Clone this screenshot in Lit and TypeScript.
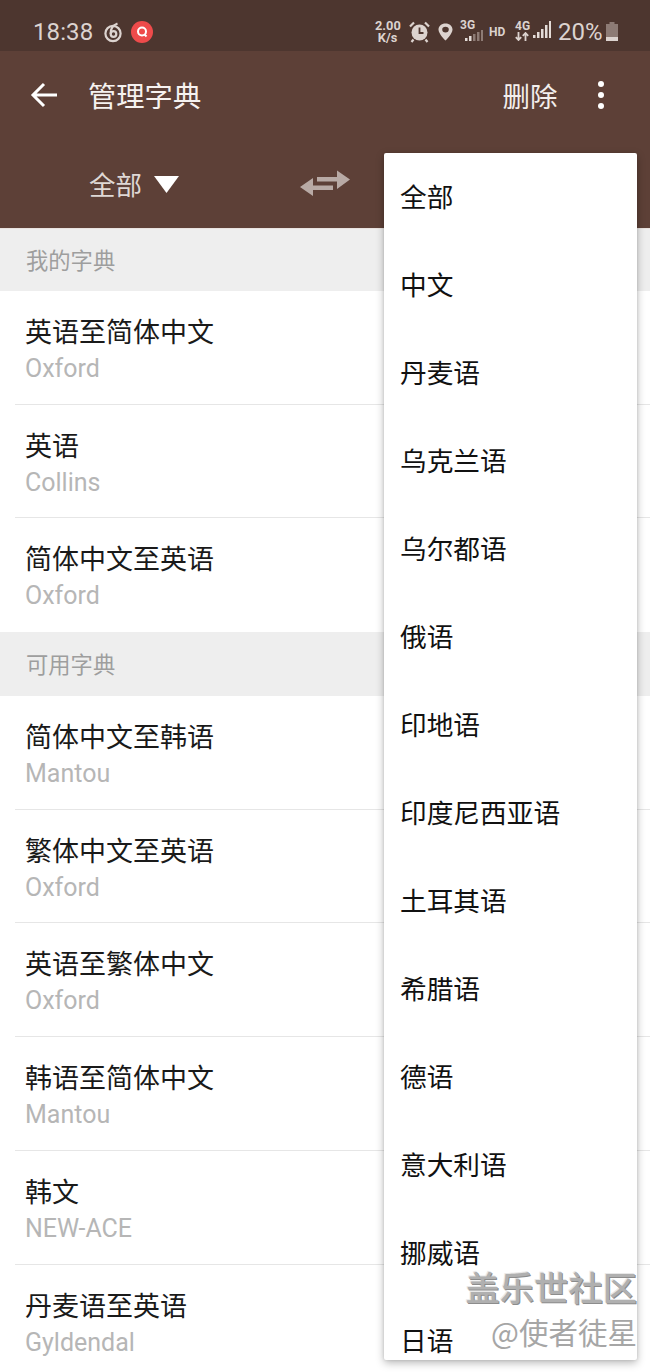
import { LitElement, html, css, svg } from "lit";
import { customElement } from "lit/decorators.js";

const my = [
  ["英语至简体中文", "Oxford"],
  ["英语", "Collins"],
  ["简体中文至英语", "Oxford"],
];
const avail = [
  ["简体中文至韩语", "Mantou"],
  ["繁体中文至英语", "Oxford"],
  ["英语至繁体中文", "Oxford"],
  ["韩语至简体中文", "Mantou"],
  ["韩文", "NEW-ACE"],
  ["丹麦语至英语", "Gyldendal"],
];
const langs = ["全部", "中文", "丹麦语", "乌克兰语", "乌尔都语", "俄语", "印地语", "印度尼西亚语", "土耳其语", "希腊语", "德语", "意大利语", "挪威语", "日语"];

const bars = (heights: number[], lit: number) => {
  const h = Math.max(...heights);
  return svg`<svg class="bars" width="18" height=${h} viewBox="0 0 18 ${h}">
    ${heights.map((v, i) => svg`<rect x=${i * 4} y=${h - v} width="2.5" height=${v} fill=${i < lit ? "#e4dcd8" : "#8d7b75"}></rect>`)}
  </svg>`;
};

@customElement("app-root")
export class AppRoot extends LitElement {
  static styles = css`
    :host { display: block; position: relative; width: 650px; height: 1372px; overflow: hidden; background: #fff;
      font-family: "Noto Sans CJK SC", Roboto, sans-serif; }
    .status { height: 51px; background: #4d362f; color: #dcd3cf; display: flex; align-items: center; padding: 12px 32px 0 33px; box-sizing: border-box; font-family: Roboto, sans-serif; }
    .time { font-size: 24px; letter-spacing: 0.1px; margin-right: 11px; }
    .spin { margin-right: 9px; display: block; }
    .rec { width: 22px; height: 22px; border-radius: 50%; background: #ee4b4b; display: flex; align-items: center; justify-content: center; }
    .spacer { flex: 1; }
    .speed { font-size: 12.8px; font-weight: 700; line-height: 12px; text-align: center; width: 25px; margin-right: 9px; }
    .speed div { height: 12px; }
    .g { font-size: 12px; font-weight: 700; line-height: 8px; height: 8px; display: block; }
    .g3 { width: 23px; margin-right: 6px; margin-top: -2px; }
    .g3 .bars { margin-left: 5px; margin-top: 1px; display: block; }
    .g4 { width: 14px; margin-right: 4px; }
    .g4 svg { display: block; margin-top: 2px; }
    .hd { font-size: 12px; font-weight: 700; margin-right: 10px; width: 16px; white-space: nowrap; }
    .sig { display: block; margin-right: 7px; }
    .pct { font-size: 24px; line-height: 24px; width: 44px; margin-right: 4px; white-space: nowrap; }
    .batt { display: block; }
    .ic-alarm { margin-right: 8px; display: block; }
    .ic-pin { margin-right: 7px; display: block; }
    .appbar { height: 178px; background: #5d4037; color: #fff; box-sizing: border-box; border-bottom: 1px solid #e9e2df; }
    .top { height: 88px; display: flex; align-items: center; padding: 0 46px 0 30px; }
    .title { font-size: 28.3px; margin-left: 30px; flex: 1; line-height: 40px; color: #f6f2f0; }
    .del { font-size: 27.5px; color: #f3eeec; margin-right: 40px; line-height: 40px; }
    .dots { display: flex; flex-direction: column; gap: 4.6px; }
    .dots i { display: block; width: 6.5px; height: 6.5px; border-radius: 50%; background: #fff; }
    .filter { display: flex; align-items: center; height: 89px; padding: 2px 0 0 89px; box-sizing: border-box; }
    .all { font-size: 26.5px; color: #dfd8d5; line-height: 40px; margin: -2px 12px 0 0; }
    .swap { margin-left: 121px; margin-top: -3px; }
    .head { height: 62px; background: #eeeeee; color: #9e9e9e; font-size: 22.3px; padding: 0 0 3px 26px; display: flex; align-items: center; box-sizing: border-box; }
    .head.second { height: 64px; }
    .row { height: 113.7px; margin-left: 15px; padding-left: 10px; box-sizing: border-box; border-bottom: 1px solid #e6e6e6; display: flex; flex-direction: column; }
    .row.last { border-bottom: none; }
    .name { font-size: 27px; line-height: 36px; color: #1a1a1a; margin-top: 22px; }
    .sub { font-size: 25px; line-height: 36px; color: #b6b6b6; font-family: Roboto, sans-serif; margin-top: 2px; }
    .menu { position: absolute; left: 384px; top: 153px; width: 253px; height: 1207px; background: #fff; border-radius: 2px; overflow: hidden;
      box-shadow: 0 3px 8px rgba(0,0,0,.28), 0 0 3px rgba(0,0,0,.12); padding-top: 1px; box-sizing: border-box; }
    .item { height: 88px; display: flex; align-items: center; padding: 0 0 5px 16px; box-sizing: border-box; font-size: 26.7px; color: #111; flex-shrink: 0; }
    .wm { position: absolute; right: 13px; top: 1266px; text-align: right; pointer-events: none; }
    .wm1 { font-size: 34.3px; font-weight: 500; line-height: 40px; color: #b0b0b0; white-space: nowrap; text-shadow: 1px 1px 0 #8c8c8c, -1px -1px 0 #e8e8e8; }
    .wm2 { font-size: 29.5px; line-height: 44px; margin-top: 3px; color: #a6a6a6; white-space: nowrap; }
  `;

  rows(list: string[][]) {
    return list.map(
      ([a, b], i) => html`<div class="row ${i === list.length - 1 ? "last" : ""}"><div class="name">${a}</div><div class="sub">${b}</div></div>`
    );
  }

  render() {
    return html`
      <div class="status">
        <span class="time">18:38</span>
        <svg class="spin" width="18" height="22" viewBox="0 0 18 22" fill="none" stroke="#dcd3cf" stroke-width="2.2">
          <circle cx="9" cy="12.500" r="7.600"></circle><circle cx="9.500" cy="13" r="2.800"></circle>
          <path d="M6.700 13C6.200 8 8.500 4.500 13.500 2.500"></path>
        </svg>
        <span class="rec">
          <svg width="14" height="14" viewBox="0 0 14 14" fill="none" stroke="#fff" stroke-width="2"><circle cx="7" cy="6.500" r="4"></circle><path d="M9.500 9.500L11.500 11.500"></path></svg>
        </span>
        <span class="spacer"></span>
        <div class="speed"><div>2.00</div><div>K/s</div></div>
        <svg class="ic-alarm" width="21" height="22" viewBox="0 0 21 22">
          <circle cx="10.500" cy="11.500" r="8" fill="#dcd3cf"></circle>
          <path d="M10.500 6.500V12H14.500" fill="none" stroke="#4d362f" stroke-width="1.800"></path>
          <path d="M1 5.500L5 1.500M20 5.500L16 1.500M4.500 18.500L2.500 21M16.500 18.500L18.500 21" stroke="#dcd3cf" stroke-width="2.200" fill="none"></path>
        </svg>
        <svg class="ic-pin" width="15" height="18" viewBox="0 0 16 22" preserveAspectRatio="none">
          <path fill-rule="evenodd" fill="#dcd3cf" d="M8 .5C3.600 .5 .5 3.800 .5 8c0 5.400 7.500 13.500 7.500 13.500S15.500 13.400 15.500 8C15.500 3.800 12.400 .5 8 .5ZM8 4.500a3.500 3.500 0 1 1 0 7 3.500 3.500 0 0 1 0-7Z"></path>
        </svg>
        <div class="g3"><span class="g">3G</span>${bars([3, 5, 7, 9, 11], 2)}</div>
        <span class="hd">HD</span>
        <div class="g4">
          <span class="g">4G</span>
          <svg width="14" height="9" viewBox="0 0 14 9" fill="none" stroke="#dcd3cf" stroke-width="1.800">
            <path d="M3.500 0V8M.8 5.200L3.500 8L6.200 5.200"></path>
            <path d="M10.500 9V1M7.800 3.800L10.500 1L13.200 3.800"></path>
          </svg>
        </div>
        <span class="sig">${bars([3, 6, 9, 13, 17], 5)}</span>
        <span class="pct">20%</span>
        <svg class="batt" width="12" height="19" viewBox="0 0 12 19"><path fill="#8d7b75" d="M3.500 2V0h5v2H12v17H0V2Z"></path><rect y="15" width="12" height="4" fill="#dcd3cf"></rect></svg>
      </div>
      <div class="appbar">
        <div class="top">
          <svg width="28" height="28" viewBox="0 0 28 28" fill="none" stroke="#fff" stroke-width="3"><path d="M27 14H3M14 3L3 14L14 25"></path></svg>
          <span class="title">管理字典</span>
          <span class="del">删除</span>
          <div class="dots"><i></i><i></i><i></i></div>
        </div>
        <div class="filter">
          <span class="all">全部</span>
          <svg width="25" height="17" viewBox="0 0 25 17"><path fill="#fff" d="M0 0H25L12.500 17Z"></path></svg>
          <svg class="swap" width="50" height="26" viewBox="0 0 50 26" fill="#b8aaa5">
            <path d="M17 7H37V.5L50 9.500L37 19V11.500H17Z"></path>
            <path d="M33 15.500H13V8L0 17L13 26V20H33Z"></path>
          </svg>
        </div>
      </div>
      <div class="head">我的字典</div>
      ${this.rows(my)}
      <div class="head second">可用字典</div>
      ${this.rows(avail)}
      <div class="menu">${langs.map((l) => html`<div class="item">${l}</div>`)}</div>
      <div class="wm"><div class="wm1">盖乐世社区</div><div class="wm2">@使者徒星</div></div>
    `;
  }
}
